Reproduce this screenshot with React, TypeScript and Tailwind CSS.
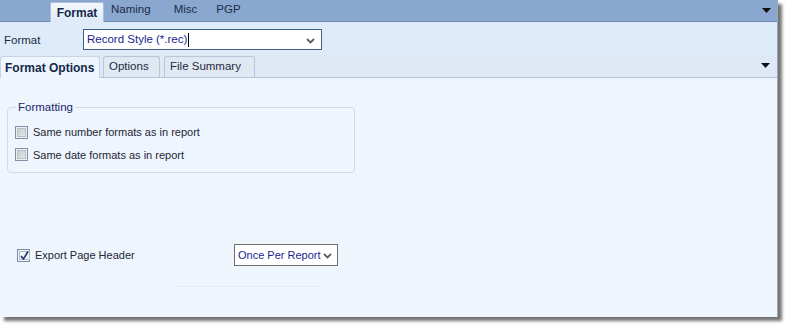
import React from 'react';

const Caret = () => (
  <svg width="9" height="6" viewBox="0 0 9 6">
    <path d="M1 1 L4.5 4.5 L8 1" fill="none" stroke="#5a5f66" strokeWidth="1.8" />
  </svg>
);

const Tri = () => (
  <svg width="9" height="5" viewBox="0 0 9 5">
    <path d="M0 0 H9 L4.5 5 Z" fill="#111" />
  </svg>
);

const Box = ({ checked }: { checked?: boolean }) => (
  <span className="w-[13px] h-[13px] shrink-0 border border-[#7f90aa] bg-[#eef2f7] p-[1px] flex">
    {checked ? (
      <span className="flex-1 bg-[#f4f6f9] border border-[#b5bcc6] flex items-center justify-center">
        <svg width="9" height="9" viewBox="0 0 9 9">
          <path d="M1 5 L3.5 8 L8 0.5" fill="none" stroke="#1f3f78" strokeWidth="1.7" />
        </svg>
      </span>
    ) : (
      <span className="flex-1 bg-gradient-to-br from-[#c9cdd2] to-[#e2e5e8] border border-[#b9bec6]" />
    )}
  </span>
);

export default function App() {
  return (
    <div className="w-[793px] h-[331px] bg-white font-['Liberation_Sans',Arial,sans-serif] text-[11.5px]">
      <div className="w-[778px] h-[317px] flex flex-col shadow-[4px_4px_3px_rgba(0,0,0,0.55)] border-r border-[#9aa7b6]">
        {/* top tabs */}
        <div className="h-[22px] bg-[#8aa7cf] border-b border-[#6c8cb8] flex items-end pl-[50px] pr-[6px]">
          <div className="h-[20px] w-[54px] -mb-px bg-gradient-to-b from-[#f2f7fd] to-[#dfeaf8] border border-b-0 border-[#a9bfdc] rounded-t-[2px] flex items-center justify-center font-bold text-[12px] text-[#14284a]">
            Format
          </div>
          <span className="ml-[7px] mb-[3px] text-[#1c2c4a]">Naming</span>
          <span className="ml-[23px] mb-[3px] text-[#1c2c4a]">Misc</span>
          <span className="ml-[19px] mb-[3px] text-[#1c2c4a]">PGP</span>
          <span className="ml-auto mb-[8px]"><Tri /></span>
        </div>
        {/* format row */}
        <div className="h-[33px] bg-[#deebf9] flex items-center pl-[4px] pt-[2px]">
          <span className="w-[79px] text-[#1c2a44] mt-[3px]">Format</span>
          <div className="w-[239px] h-[21px] bg-white border border-[#3c5f8c] flex items-center pl-[3px] pr-[6px]">
            <span className="text-[#1a1f8f]">Record Style (*.rec)</span>
            <span className="w-px h-[14px] bg-black ml-px" />
            <span className="ml-auto mt-[2px]"><Caret /></span>
          </div>
        </div>
        {/* sub tabs */}
        <div className="h-[23px] bg-[#dfe9f6] border-b border-[#b4c5da] flex items-end pr-[7px]">
          <div className="h-[22px] w-[100px] -mb-px bg-[#eef5fd] border border-b-0 border-[#c6d4e4] rounded-t-[3px] flex items-center pl-[4px] font-bold text-[12px] text-[#14284a]">
            Format Options
          </div>
          <div className="ml-[3px] h-[21px] w-[57px] bg-[#e0e8f1] border border-b-0 border-[#b7c6d8] rounded-t-[3px] flex items-center pl-[5px] text-[#1c2a44]">
            Options
          </div>
          <div className="ml-[4px] h-[21px] w-[91px] bg-[#e0e8f1] border border-b-0 border-[#b7c6d8] rounded-t-[3px] flex items-center pl-[5px] text-[#1c2a44]">
            File Summary
          </div>
          <span className="ml-auto mb-[9px]"><Tri /></span>
        </div>
        {/* content */}
        <div className="flex-1 bg-[#eef5fd] flex flex-col pl-[7px] pt-[23px]">
          <fieldset className="w-[348px] h-[72px] border border-[#d2dce8] rounded-[4px] pl-[7px] pr-2 m-0">
            <legend className="px-[2px] text-[#1b2670] leading-[13px] ml-[1px]">Formatting</legend>
            <div className="flex items-center gap-[5px] mt-[10px] text-[11px] text-[#1e2636]">
              <Box /> Same number formats as in report
            </div>
            <div className="flex items-center gap-[5px] mt-[6px] text-[11px] text-[#1e2636]">
              <Box /> Same date formats as in report
            </div>
          </fieldset>
          <div className="flex items-center mt-[71px] pl-[10px]">
            <div className="w-[217px] flex items-center">
              <Box checked />
              <span className="ml-[5px] text-[11px] text-[#1e2636]">Export Page Header</span>
            </div>
            <div className="w-[104px] h-[22px] bg-white border border-[#6f6f6f] flex items-center pl-[3px] pr-[5px] whitespace-nowrap">
              <span className="text-[11px] text-[#1a1f8f]">Once Per Report</span>
              <span className="ml-auto mt-[2px]"><Caret /></span>
            </div>
          </div>
          <div className="ml-[168px] mt-[20px] w-[146px] h-px bg-[#e3ebf4]" />
        </div>
      </div>
    </div>
  );
}
